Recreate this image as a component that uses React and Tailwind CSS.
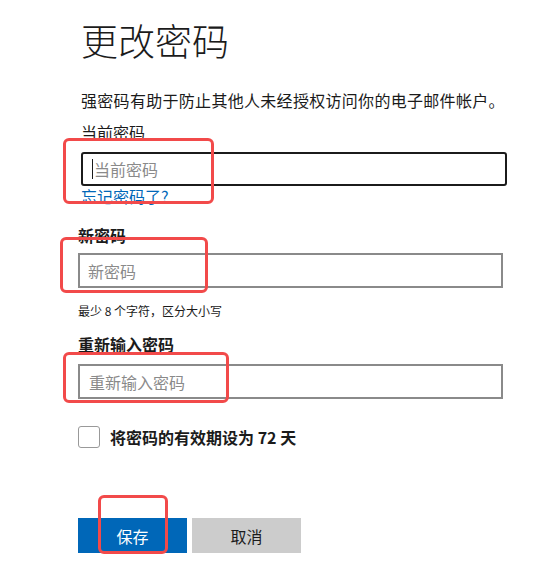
const font = { fontFamily: '"Noto Sans CJK SC", "Noto Sans", sans-serif' };

function Mark({ className }) {
  return (
    <div
      className={`pointer-events-none absolute rounded-[6px] border-[3px] border-[#f24a4a] ${className}`}
    />
  );
}

export default function App() {
  return (
    <div className="relative h-[570px] w-[549px] overflow-hidden bg-white text-[#1b1b1b]" style={font}>
      <div className="pl-[81px] pt-[18px]">
        <h1 className="text-[37px] font-light leading-[44px]">更改密码</h1>
        <p className="mt-[28px] text-[16px] leading-[20px] tracking-[0.3px]">
          强密码有助于防止其他人未经授权访问你的电子邮件帐户。
        </p>
        <div className="mt-[12px] text-[16px] leading-[20px]">当前密码</div>
        <div className="mt-[10px] flex h-[34px] w-[426px] items-center rounded-[3px] border-2 border-[#1b1b1b] pl-[9px]">
          <span className="h-[20px] w-px bg-[#1b1b1b]" />
          <span className="ml-[1px] text-[16px] text-[#8a8a8a]">当前密码</span>
        </div>
        <a className="block text-[16px] leading-[20px] text-[#0067b8]">忘记密码了?</a>
      </div>

      <div className="pl-[78px]">
        <div className="mt-[19px] text-[16px] font-bold leading-[20px]">新密码</div>
        <div className="mt-[8px] flex h-[35px] w-[425px] items-center border-2 border-[#8a8a8a] pl-[8px] text-[16px] text-[#8a8a8a]">
          新密码
        </div>
        <div className="mt-[15px] text-[12px] leading-[16px] text-[#1b1b1b]">最少 8 个字符，区分大小写</div>
        <div className="mt-[15px] text-[16px] font-bold leading-[20px]">重新输入密码</div>
        <div className="mt-[10px] flex h-[35px] w-[425px] items-center border-2 border-[#8a8a8a] pl-[9px] text-[16px] text-[#8a8a8a]">
          重新输入密码
        </div>

        <label className="mt-[27px] flex items-center gap-[10px]">
          <span className="h-[22px] w-[22px] rounded-[3px] border border-[#999999] bg-white" />
          <span className="text-[16px] font-bold leading-[20px]">将密码的有效期设为 72 天</span>
        </label>

        <div className="mt-[70px] flex gap-[5px]">
          <button className="h-[35px] w-[109px] bg-[#0067b8] text-[16px] text-white">保存</button>
          <button className="h-[35px] w-[109px] bg-[#cccccc] text-[16px] text-[#1b1b1b]">取消</button>
        </div>
      </div>

      <Mark className="left-[63px] top-[138px] h-[66px] w-[151px]" />
      <Mark className="left-[60px] top-[237px] h-[56px] w-[148px]" />
      <Mark className="left-[63px] top-[352px] h-[51px] w-[166px]" />
      <Mark className="left-[98px] top-[495px] h-[59px] w-[70px]" />
    </div>
  );
}
